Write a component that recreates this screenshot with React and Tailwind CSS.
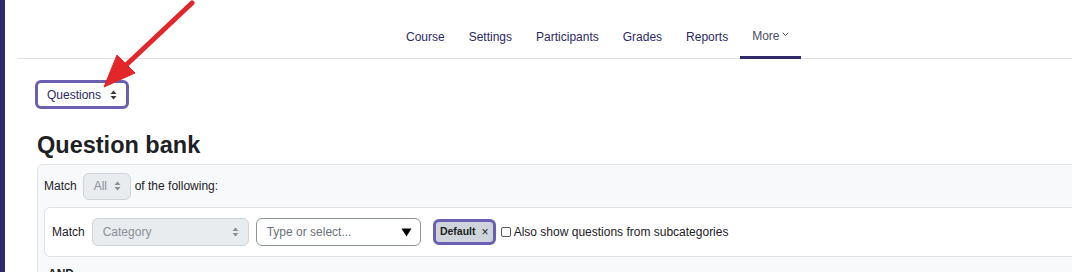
import React from 'react';

const font = { fontFamily: '"Liberation Sans", Arial, sans-serif' };

function UpDown({ className = '' }) {
  return (
    <svg width="7" height="10" viewBox="0 0 7 10" className={className}>
      <path d="M3.5 0.5 L6.5 4 L0.5 4 Z" fill="currentColor" />
      <path d="M3.5 9.5 L6.5 6 L0.5 6 Z" fill="currentColor" />
    </svg>
  );
}

const navItems = ['Course', 'Settings', 'Participants', 'Grades', 'Reports'];

export default function App() {
  return (
    <div className="relative flex w-[1072px] h-[272px] overflow-hidden bg-white text-[#1d2125]" style={font}>
      <div className="w-[5px] shrink-0 bg-[#2f2a6e]" />
      <div className="flex-1 pl-[13px] min-w-0">
        {/* secondary nav */}
        <nav className="flex h-[59px] border-b border-[#dee2e6] pl-[376px]">
          {navItems.map((item) => (
            <a key={item} className="flex items-center px-[12px] pt-[15px] text-[12px] text-[#2b2966]">
              {item}
            </a>
          ))}
          <a className="flex items-center gap-[3px] px-[12px] pt-[15px] text-[12px] text-[#4a4e63] border-b-[3px] border-[#2f2a6e] -mb-px">
            More
            <svg width="7" height="5" viewBox="0 0 7 5" className="-mt-[3px]">
              <path d="M0.8 0.8 L3.5 3.6 L6.2 0.8" fill="none" stroke="currentColor" strokeWidth="1" />
            </svg>
          </a>
        </nav>

        {/* tertiary select */}
        <div className="pl-[17px] pt-[21px]">
          <div className="flex w-[94px] h-[29px] items-center justify-between rounded-[6px] border-[3px] border-[#6a5fb3] pl-[9px] pr-[9px] text-[12px] text-[#2b2966]">
            <span>Questions</span>
            <UpDown className="text-[#343a40]" />
          </div>
        </div>

        <h2 className="pl-[19px] pt-[22px] text-[23.5px] leading-[28px] font-bold text-[#1d2125]">Question bank</h2>

        {/* filter panel */}
        <div className="ml-[19px] mt-[5px] w-[1060px] rounded-tl-[6px] border border-[#dee2e6] bg-[#f8f9fa]">
          <div className="flex h-[42px] items-center pl-[6px] text-[12px]">
            <span>Match</span>
            <div className="ml-[6px] flex w-[48px] h-[27px] items-center justify-between rounded-[6px] border border-[#ced4da] bg-[#e9ecef] pl-[10px] pr-[9px] text-[#8a8f96]">
              <span>All</span>
              <UpDown className="text-[#8a8f96]" />
            </div>
            <span className="ml-[4px]">of the following:</span>
          </div>

          <div className="ml-[6px] flex h-[50px] items-center rounded-[6px] border border-[#dee2e6] bg-white pl-[7px] text-[12px]">
            <span>Match</span>
            <div className="ml-[7px] flex w-[157px] h-[28px] items-center justify-between rounded-[6px] border border-[#ced4da] bg-[#e9ecef] pl-[10px] pr-[9px] text-[#8a8f96]">
              <span>Category</span>
              <UpDown className="text-[#8a8f96]" />
            </div>
            <div className="ml-[7px] flex w-[165px] h-[28px] items-center justify-between rounded-[6px] border border-[#8f959e] bg-white pl-[10px] pr-[8px] text-[#6a737b]">
              <span>Type or select...</span>
              <svg width="11" height="9" viewBox="0 0 11 9">
                <path d="M0.5 0.5 L10.5 0.5 L5.5 8.5 Z" fill="#000" />
              </svg>
            </div>
            <div className="ml-[12px] flex w-[63px] h-[26px] items-center justify-center gap-[6px] rounded-[6px] border-[3px] border-[#6a5fb3] bg-[#ced4da] text-[10.5px] font-bold text-[#1d2125]">
              <span>Default</span>
              <span className="font-normal text-[12px]">×</span>
            </div>
            <label className="ml-[5px] flex items-center gap-[3px]">
              <span className="inline-block w-[10px] h-[10px] rounded-[2px] border border-[#555] bg-white" />
              <span>Also show questions from subcategories</span>
            </label>
          </div>

          <div className="pl-[10px] pt-[8px] text-[12px] font-bold">AND</div>
        </div>
      </div>

      {/* red annotation arrow */}
      <svg className="absolute left-0 top-0 pointer-events-none" width="220" height="110" viewBox="0 0 220 110">
        <line x1="192" y1="3" x2="124" y2="67" stroke="#e3262a" strokeWidth="5" strokeLinecap="round" />
        <path d="M104 87 L117 55 L135 73 Z" fill="#e3262a" stroke="#e3262a" strokeWidth="1" strokeLinejoin="round" />
      </svg>
    </div>
  );
}
